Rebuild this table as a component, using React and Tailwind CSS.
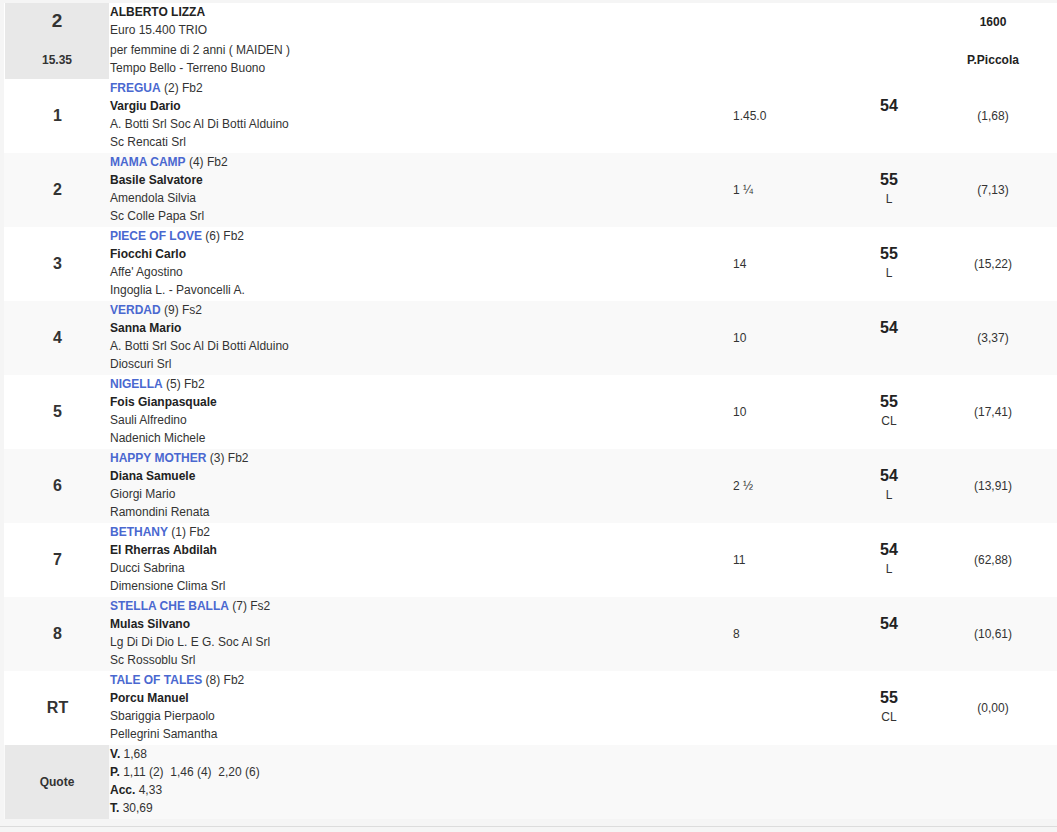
import React from 'react';

const runners = [
  { pos: '1', horse: 'FREGUA', num: '(2) Fb2', jockey: 'Vargiu Dario', trainer: 'A. Botti Srl Soc Al Di Botti Alduino', owner: 'Sc Rencati Srl', dist: '1.45.0', weight: '54', note: '', odds: '(1,68)' },
  { pos: '2', horse: 'MAMA CAMP', num: '(4) Fb2', jockey: 'Basile Salvatore', trainer: 'Amendola Silvia', owner: 'Sc Colle Papa Srl', dist: '1 ¼', weight: '55', note: 'L', odds: '(7,13)' },
  { pos: '3', horse: 'PIECE OF LOVE', num: '(6) Fb2', jockey: 'Fiocchi Carlo', trainer: "Affe' Agostino", owner: 'Ingoglia L. - Pavoncelli A.', dist: '14', weight: '55', note: 'L', odds: '(15,22)' },
  { pos: '4', horse: 'VERDAD', num: '(9) Fs2', jockey: 'Sanna Mario', trainer: 'A. Botti Srl Soc Al Di Botti Alduino', owner: 'Dioscuri Srl', dist: '10', weight: '54', note: '', odds: '(3,37)' },
  { pos: '5', horse: 'NIGELLA', num: '(5) Fb2', jockey: 'Fois Gianpasquale', trainer: 'Sauli Alfredino', owner: 'Nadenich Michele', dist: '10', weight: '55', note: 'CL', odds: '(17,41)' },
  { pos: '6', horse: 'HAPPY MOTHER', num: '(3) Fb2', jockey: 'Diana Samuele', trainer: 'Giorgi Mario', owner: 'Ramondini Renata', dist: '2 ½', weight: '54', note: 'L', odds: '(13,91)' },
  { pos: '7', horse: 'BETHANY', num: '(1) Fb2', jockey: 'El Rherras Abdilah', trainer: 'Ducci Sabrina', owner: 'Dimensione Clima Srl', dist: '11', weight: '54', note: 'L', odds: '(62,88)' },
  { pos: '8', horse: 'STELLA CHE BALLA', num: '(7) Fs2', jockey: 'Mulas Silvano', trainer: 'Lg Di Di Dio L. E G. Soc Al Srl', owner: 'Sc Rossoblu Srl', dist: '8', weight: '54', note: '', odds: '(10,61)' },
  { pos: 'RT', horse: 'TALE OF TALES', num: '(8) Fb2', jockey: 'Porcu Manuel', trainer: 'Sbariggia Pierpaolo', owner: 'Pellegrini Samantha', dist: '', weight: '55', note: 'CL', odds: '(0,00)' },
];

const cols = 'grid grid-cols-[105px_619px_108px_106px_102px]';

export default function App() {
  return (
    <div className="w-[1057px] min-h-[832px] bg-[#f5f5f5] font-['Liberation_Sans',Arial,sans-serif] text-[12px] leading-[18px] text-[#333]">
      <div className="pl-[4px] pt-[3px] pb-[7px] border-b border-[#dcdcdc] w-[1057px]">
        {/* race header */}
        <div className={`${cols} bg-white h-[76px]`}>
          <div className="bg-[#e8e8e8] flex flex-col items-center ml-px">
            <span className="text-[19px] font-bold leading-[18px] mt-[9px] text-[#333]">2</span>
            <span className="font-bold mt-[21px]">15.35</span>
          </div>
          <div className="pl-px">
            <div className="font-bold text-[#222]">ALBERTO LIZZA</div>
            <div>Euro 15.400 TRIO</div>
            <div className="mt-[2px]">per femmine di 2 anni ( MAIDEN )</div>
            <div>Tempo Bello - Terreno Buono</div>
          </div>
          <div />
          <div />
          <div className="flex flex-col items-center font-bold text-[#222]">
            <span className="mt-[10px]">1600</span>
            <span className="mt-[20px]">P.Piccola</span>
          </div>
        </div>

        {runners.map((r, i) => (
          <div key={r.horse} className={`${cols} h-[74px] ${i % 2 === 0 ? 'bg-white' : 'bg-[#f9f9f9]'}`}>
            <div className="flex items-center justify-center text-[16px] font-bold text-[#333] pl-[2px]">{r.pos}</div>
            <div className="pl-px">
              <div>
                <span className="font-bold text-[#4a68d0]">{r.horse}</span> {r.num}
              </div>
              <div className="font-bold text-[#222]">{r.jockey}</div>
              <div>{r.trainer}</div>
              <div>{r.owner}</div>
            </div>
            <div className="flex items-center pl-[5px]">{r.dist}</div>
            <div className="flex flex-col items-center justify-center pb-[2px]">
              <span className="text-[16px] font-bold leading-[20px] text-[#222]">{r.weight}</span>
              <span className="leading-[18px]">{r.note || '\u00a0'}</span>
            </div>
            <div className="flex items-center justify-center">{r.odds}</div>
          </div>
        ))}

        {/* quote */}
        <div className={`${cols} h-[74px] bg-[#f9f9f9]`}>
          <div className="bg-[#e8e8e8] flex items-center justify-center font-bold ml-px">Quote</div>
          <div className="pl-px whitespace-pre">
            <div><b className="text-[#222]">V.</b> 1,68</div>
            <div><b className="text-[#222]">P.</b> 1,11 (2)  1,46 (4)  2,20 (6)</div>
            <div><b className="text-[#222]">Acc.</b> 4,33</div>
            <div><b className="text-[#222]">T.</b> 30,69</div>
          </div>
          <div />
          <div />
          <div />
        </div>
      </div>
    </div>
  );
}
